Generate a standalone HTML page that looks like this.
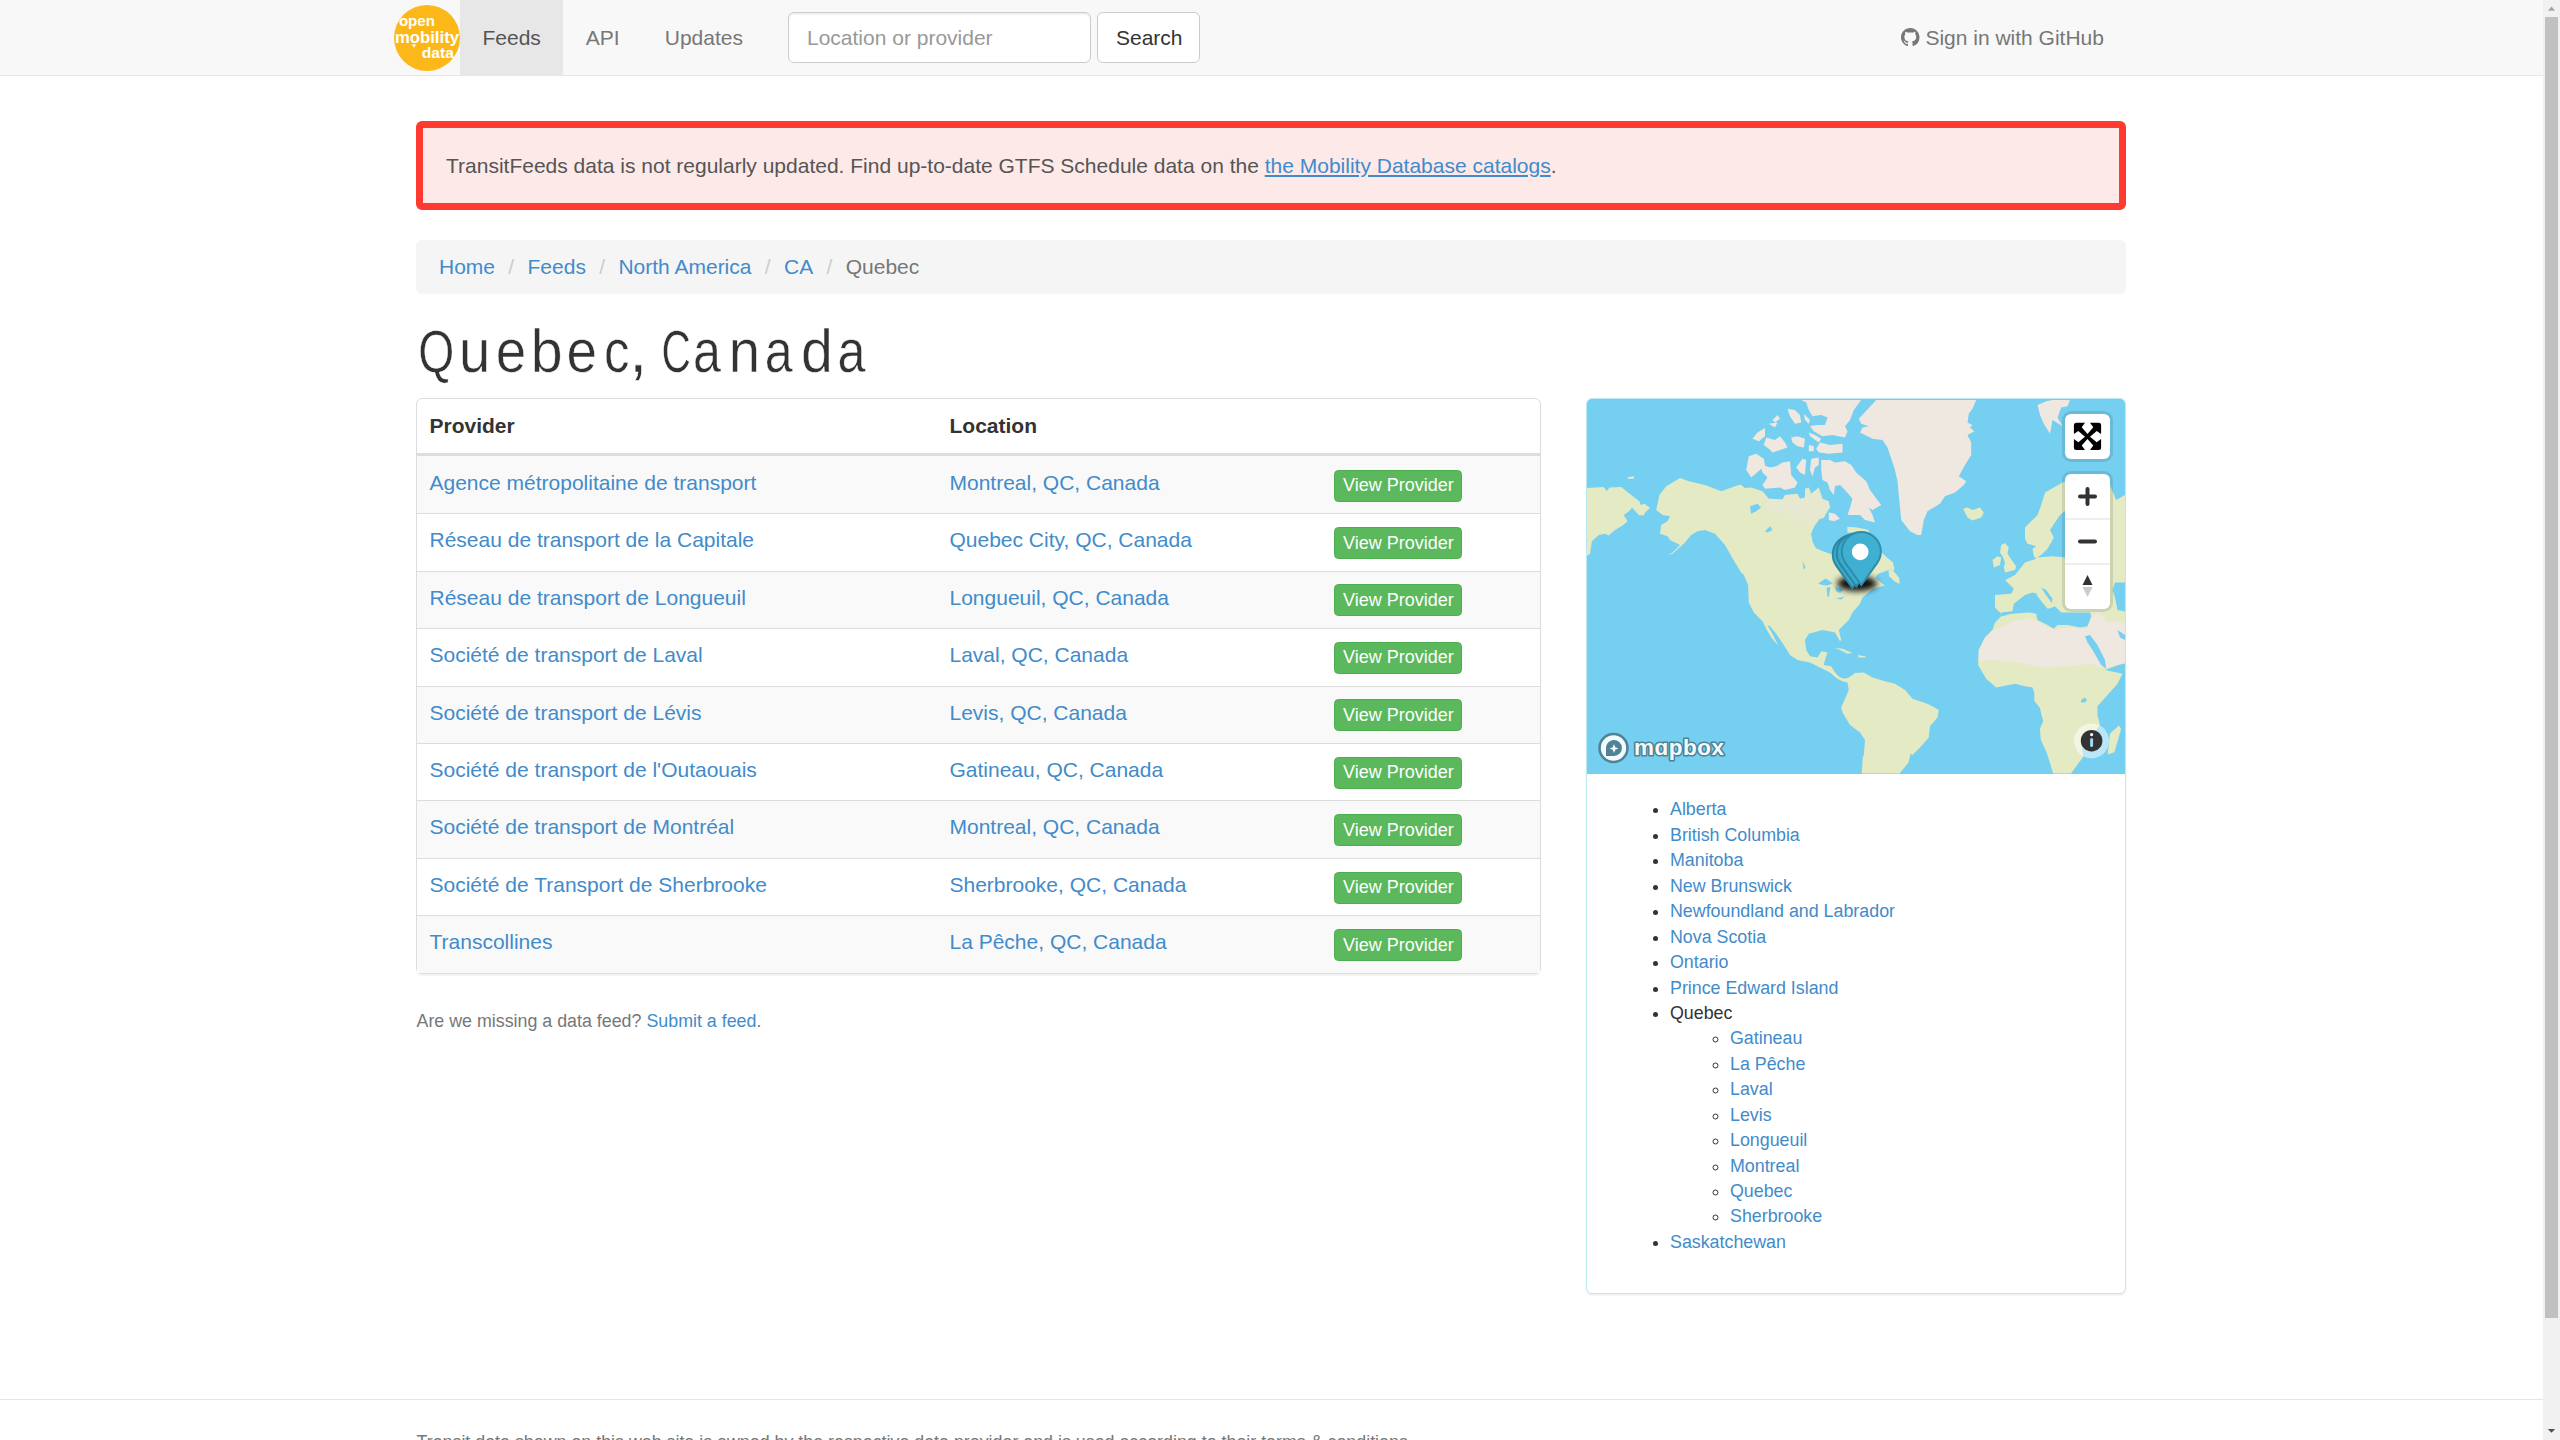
<!DOCTYPE html>
<html>
<head>
<meta charset="utf-8">
<style>
html,body{margin:0;padding:0;}
body{width:2560px;height:1440px;overflow:hidden;position:relative;background:#fff;}
#pg{zoom:1.5;width:1695.333px;font-family:"Liberation Sans",sans-serif;font-size:14px;line-height:1.42857143;color:#333;position:relative;}
*{box-sizing:border-box;}
a{color:#428bca;text-decoration:none;}
.container{width:1170px;margin:0 auto;padding:0 15px;position:relative;}
.container:after,.row:after{content:"";display:table;clear:both;}
.navbar{background:#f8f8f8;border-bottom:1px solid #e7e7e7;height:50.667px;margin-bottom:30px;}
.navbar .container{height:50px;}
.brand{position:absolute;left:0;top:3px;width:44px;height:44px;}
.nav{position:absolute;left:44px;top:0;height:50px;margin:0;padding:0;list-style:none;}
.nav li{float:left;}
.nav a{display:block;padding:15px;line-height:20px;color:#777;}
.nav li.active a{background:#e7e7e7;color:#555;}
.nform{position:absolute;left:262.67px;top:8px;}
.nform input{width:202px;height:34px;padding:6px 12px;font:inherit;font-size:14px;color:#555;border:1px solid #ccc;border-radius:4px;box-shadow:inset 0 1px 1px rgba(0,0,0,.075);background:#fff;vertical-align:middle;font-family:"Liberation Sans",sans-serif;}
.nform input::placeholder{color:#999;}
.nform button{margin-left:4px;height:34px;padding:6px 12px;font-size:14px;line-height:20px;border:1px solid #ccc;border-radius:4px;background:#fff;color:#333;vertical-align:middle;font-family:"Liberation Sans",sans-serif;width:69px;}
.nright{position:absolute;right:15px;top:0;line-height:20px;padding:15px 15px;color:#777;}
.alert{border:5px solid #ff3a30;background:#fde9e8;border-radius:4px;padding:15px 20px 15px 15px;color:#555;height:59.333px;margin-bottom:20px;}
.alert a{text-decoration:underline;}
.breadcrumb{background:#f5f5f5;border-radius:4px;padding:8px 15px;margin:0 0 20px;list-style:none;height:36px;}
.breadcrumb li{display:inline-block;}
.breadcrumb li+li:before{content:"/\00a0";padding:0 5px;color:#ccc;}
.breadcrumb .act{color:#777;}
h1{font-size:39px;line-height:39.333px;margin:20px 0 10px;font-weight:normal;color:#333;height:39.333px;}
h1 span{display:inline-block;transform:scaleX(0.88);transform-origin:0 0;letter-spacing:3.8px;word-spacing:-3px;position:relative;left:2px;top:-0.5px;}
.row{margin:0 -15px;}
.col8{float:left;width:780px;padding:0 15px;}
.col4{float:left;width:390px;padding:0 15px;}
.panel{border:1px solid #ddd;border-radius:4px;background:#fff;margin-bottom:20px;}
table{width:100%;border-collapse:collapse;table-layout:fixed;}
th,td{text-align:left;padding:7.3px 8px 8.7px;line-height:20px;vertical-align:top;}
th{border-bottom:2px solid #ddd;font-weight:bold;padding-top:7.9px;padding-bottom:8.1px;}
tbody tr:first-child td{padding-top:7.9px;padding-bottom:8.7px;}
td{border-top:1px solid #ddd;}
tbody tr{height:38.3px;}
.panel{box-shadow:0 1px 1px rgba(0,0,0,.05);}
tbody tr:nth-child(odd){background:#f9f9f9;}

.btn{display:inline-block;white-space:nowrap;position:relative;top:0.9px;left:0.67px;padding:1px 5px;font-size:12px;line-height:1.5;border-radius:3px;color:#fff;background:#5cb85c;border:1px solid #4cae4c;vertical-align:middle;}
.miss{font-size:11.9px;color:#777;margin:0 0 10px;padding-top:3.33px;}
.info{border-color:#bce8f1;}
.map{height:250px;border-radius:3px 3px 0 0;position:relative;overflow:hidden;}
.pbody{padding:15px 15px 15px;}
.lst{margin:0 0 10px;padding-left:40px;padding-top:0.67px;font-size:11.9px;line-height:16.96px;}
.lst ul{padding-left:40px;margin:0;list-style:circle;}
.footer{border-top:1px solid #e5e5e5;margin-top:50px;padding-top:20px;color:#777;font-size:11.9px;}
.mctl{position:absolute;right:15px;width:45px;background:#fff;border-radius:6px;box-shadow:0 0 0 3px rgba(0,0,0,.1);overflow:hidden;}
.mctl svg{display:block;}
</style>
</head>
<body>
<div id="pg">
<div class="navbar"><div class="container">
 <div class="brand"></div>
 <ul class="nav"><li class="active"><a>Feeds</a></li><li><a>API</a></li><li><a>Updates</a></li></ul>
 <div class="nform"><input placeholder="Location or provider"><button>Search</button></div>
 <div class="nright">Sign in with GitHub</div>
</div></div>
<div class="container">
 <div class="alert">TransitFeeds data is not regularly updated. Find up-to-date GTFS Schedule data on the <a>the Mobility Database catalogs</a>.</div>
 <ol class="breadcrumb">
<li><a>Home</a></li>
<li><a>Feeds</a></li>
<li><a>North America</a></li>
<li><a>CA</a></li>
<li class="act">Quebec</li>
</ol>
 <h1></h1>
 <div class="row">
 <div class="col8">
  <div class="panel"><table>
   <thead><tr><th style="width:346.67px">Provider</th><th style="width:256px">Location</th><th></th></tr></thead>
   <tbody>
   <tr><td><a>Agence métropolitaine de transport</a></td><td><a>Montreal, QC, Canada</a></td><td><a class="btn">View Provider</a></td></tr>
   <tr><td><a>Réseau de transport de la Capitale</a></td><td><a>Quebec City, QC, Canada</a></td><td><a class="btn">View Provider</a></td></tr>
   <tr><td><a>Réseau de transport de Longueuil</a></td><td><a>Longueuil, QC, Canada</a></td><td><a class="btn">View Provider</a></td></tr>
   <tr><td><a>Société de transport de Laval</a></td><td><a>Laval, QC, Canada</a></td><td><a class="btn">View Provider</a></td></tr>
   <tr><td><a>Société de transport de Lévis</a></td><td><a>Levis, QC, Canada</a></td><td><a class="btn">View Provider</a></td></tr>
   <tr><td><a>Société de transport de l'Outaouais</a></td><td><a>Gatineau, QC, Canada</a></td><td><a class="btn">View Provider</a></td></tr>
   <tr><td><a>Société de transport de Montréal</a></td><td><a>Montreal, QC, Canada</a></td><td><a class="btn">View Provider</a></td></tr>
   <tr><td><a>Société de Transport de Sherbrooke</a></td><td><a>Sherbrooke, QC, Canada</a></td><td><a class="btn">View Provider</a></td></tr>
   <tr><td><a>Transcollines</a></td><td><a>La Pêche, QC, Canada</a></td><td><a class="btn">View Provider</a></td></tr>
   </tbody></table></div>
  <p class="miss">Are we missing a data feed? <a>Submit a feed</a>.</p>
 </div>
 <div class="col4">
  <div class="panel info">
   <div class="map"></div>
   <div class="pbody">
    <ul class="lst">
     <li><a>Alberta</a></li>
     <li><a>British Columbia</a></li>
     <li><a>Manitoba</a></li>
     <li><a>New Brunswick</a></li>
     <li><a>Newfoundland and Labrador</a></li>
     <li><a>Nova Scotia</a></li>
     <li><a>Ontario</a></li>
     <li><a>Prince Edward Island</a></li>
     <li>Quebec
      <ul>
       <li><a>Gatineau</a></li>
       <li><a>La Pêche</a></li>
       <li><a>Laval</a></li>
       <li><a>Levis</a></li>
       <li><a>Longueuil</a></li>
       <li><a>Montreal</a></li>
       <li><a>Quebec</a></li>
       <li><a>Sherbrooke</a></li>
      </ul>
     </li>
     <li><a>Saskatchewan</a></li>
    </ul>
   </div>
  </div>
 </div>
 </div>
</div>
<div class="footer"><div class="container">Transit data shown on this web site is owned by the respective data provider and is used according to their terms &amp; conditions.</div></div>

</div>
<div id="map" style="position:absolute;left:1587px;top:399px;width:538px;height:375px;overflow:hidden;border-radius:5px 5px 0 0;"><svg width="538" height="375" viewBox="0 0 538 375" style="position:absolute;left:0;top:0"><defs><clipPath id="amc"><path d="M72.4,96.0 79.2,87.2 93.0,79.1 101.8,82.2 118.0,86.0 134.2,92.2 148.0,87.2 153.6,85.4 158.0,89.1 164.2,88.5 175.5,92.2 181.8,99.8 195.5,100.4 198.0,96.0 210.5,94.8 213.0,99.8 218.0,98.5 218.0,89.8 221.8,88.5 224.2,94.8 231.8,88.5 235.5,99.8 241.8,102.2 243.0,108.5 240.5,112.2 235.5,121.0 230.5,126.0 225.5,131.0 224.3,135.3 225.8,142.9 228.9,149.0 235.8,152.1 244.9,155.2 257.9,167.4 269.4,159.7 273.2,144.5 269.4,133.8 260.2,133.8 260.2,127.7 270.1,128.4 280.8,130.7 294.6,153.6 301.4,159.7 306.0,163.6 307.6,171.2 303.0,170.4 290.8,175.0 288.5,178.8 297.6,186.5 285.4,190.3 275.5,198.5 273.0,204.8 265.5,213.5 261.8,221.0 255.5,227.2 251.8,231.0 254.2,241.0 253.0,242.2 248.0,233.5 235.5,231.0 221.8,234.8 218.0,241.0 219.2,251.0 223.0,257.2 230.5,258.5 234.2,252.2 240.5,253.5 238.0,261.0 236.8,266.0 244.2,267.2 248.0,273.5 253.0,278.5 258.0,279.8 261.8,278.5 268.0,274.1 276.8,273.5 285.5,278.5 298.0,282.2 308.0,284.8 318.0,291.0 325.5,299.8 336.8,303.5 343.0,306.0 351.8,311.0 350.5,318.5 343.0,327.2 341.8,338.5 333.0,348.5 325.5,356.0 323.7,354.5 321.5,363.4 312.6,374.5 274.7,374.5 275.8,357.8 276.8,356.0 278.0,341.0 273.0,333.5 263.0,326.0 255.5,313.5 254.2,308.5 258.0,299.8 261.8,291.0 260.5,283.5 255.5,282.2 250.5,279.8 243.0,273.5 233.0,268.5 223.0,263.5 210.5,261.0 203.0,256.0 196.8,246.0 189.2,234.8 183.0,227.2 180.5,226.0 181.8,228.5 186.8,237.2 191.1,246.6 184.2,238.5 179.2,229.8 175.5,222.2 166.8,213.5 161.8,203.5 161.1,186.0 156.8,176.0 154.2,173.5 148.0,163.5 143.0,154.8 138.0,146.0 128.0,134.8 118.0,131.0 110.5,132.2 104.2,136.0 98.0,143.5 85.5,154.8 80.5,156.0 85.5,153.5 93.0,146.0 88.0,143.5 83.0,141.0 80.5,137.2 73.0,134.8 74.2,126.0 80.5,122.2 83.0,117.2 75.5,116.0 69.2,111.0Z"/></clipPath><filter id="bl2" x="-20%" y="-20%" width="140%" height="140%"><feGaussianBlur stdDeviation="4"/></filter><filter id="bl" x="-50%" y="-50%" width="200%" height="200%"><feGaussianBlur stdDeviation="3"/></filter></defs><rect width="538" height="375" fill="#75cff0"/><path fill="#e3eac4" d="M72.4,96.0 79.2,87.2 93.0,79.1 101.8,82.2 118.0,86.0 134.2,92.2 148.0,87.2 153.6,85.4 158.0,89.1 164.2,88.5 175.5,92.2 181.8,99.8 195.5,100.4 198.0,96.0 210.5,94.8 213.0,99.8 218.0,98.5 218.0,89.8 221.8,88.5 224.2,94.8 231.8,88.5 235.5,99.8 241.8,102.2 243.0,108.5 240.5,112.2 235.5,121.0 230.5,126.0 225.5,131.0 224.3,135.3 225.8,142.9 228.9,149.0 235.8,152.1 244.9,155.2 257.9,167.4 269.4,159.7 273.2,144.5 269.4,133.8 260.2,133.8 260.2,127.7 270.1,128.4 280.8,130.7 294.6,153.6 301.4,159.7 306.0,163.6 307.6,171.2 303.0,170.4 290.8,175.0 288.5,178.8 297.6,186.5 285.4,190.3 275.5,198.5 273.0,204.8 265.5,213.5 261.8,221.0 255.5,227.2 251.8,231.0 254.2,241.0 253.0,242.2 248.0,233.5 235.5,231.0 221.8,234.8 218.0,241.0 219.2,251.0 223.0,257.2 230.5,258.5 234.2,252.2 240.5,253.5 238.0,261.0 236.8,266.0 244.2,267.2 248.0,273.5 253.0,278.5 258.0,279.8 261.8,278.5 268.0,274.1 276.8,273.5 285.5,278.5 298.0,282.2 308.0,284.8 318.0,291.0 325.5,299.8 336.8,303.5 343.0,306.0 351.8,311.0 350.5,318.5 343.0,327.2 341.8,338.5 333.0,348.5 325.5,356.0 323.7,354.5 321.5,363.4 312.6,374.5 274.7,374.5 275.8,357.8 276.8,356.0 278.0,341.0 273.0,333.5 263.0,326.0 255.5,313.5 254.2,308.5 258.0,299.8 261.8,291.0 260.5,283.5 255.5,282.2 250.5,279.8 243.0,273.5 233.0,268.5 223.0,263.5 210.5,261.0 203.0,256.0 196.8,246.0 189.2,234.8 183.0,227.2 180.5,226.0 181.8,228.5 186.8,237.2 191.1,246.6 184.2,238.5 179.2,229.8 175.5,222.2 166.8,213.5 161.8,203.5 161.1,186.0 156.8,176.0 154.2,173.5 148.0,163.5 143.0,154.8 138.0,146.0 128.0,134.8 118.0,131.0 110.5,132.2 104.2,136.0 98.0,143.5 85.5,154.8 80.5,156.0 85.5,153.5 93.0,146.0 88.0,143.5 83.0,141.0 80.5,137.2 73.0,134.8 74.2,126.0 80.5,122.2 83.0,117.2 75.5,116.0 69.2,111.0Z"/>
<path fill="#e3eac4" d="M458.0,93.5 475.5,83.5 493.0,78.5 513.0,82.2 523.0,86.0 529.2,101.0 538.0,96.0 543.0,96.0 543.0,263.5 538.0,263.5 518.0,271.0 535.5,274.8 530.5,284.8 520.5,296.0 510.5,307.2 510.5,316.0 513.0,326.0 514.1,324.4 495.1,348.9 496.2,357.8 484.0,374.5 466.2,374.5 462.8,363.4 459.5,353.3 453.9,341.1 452.8,330.0 456.2,322.2 452.8,308.8 447.3,302.1 447.3,291.0 448.0,296.0 445.5,288.5 438.0,287.2 428.0,284.8 409.2,288.5 399.2,279.8 391.1,266.0 391.8,251.0 398.0,238.5 405.5,231.0 408.0,223.5 415.5,216.0 413.0,213.5 408.0,208.5 408.0,196.0 424.2,194.8 426.8,189.8 418.0,181.0 428.0,176.0 438.0,163.5 449.2,159.8 446.8,157.2 445.5,149.8 449.2,147.2 440.5,144.8 438.0,139.8 438.0,128.5 443.0,123.5 450.5,116.0 454.2,106.0Z"/>
<path fill="#eee8e0" fill-opacity=".5" filter="url(#bl2)" clip-path="url(#amc)" d="M175.5,92.2 181.8,99.8 195.5,100.4 198.0,96.0 210.5,94.8 213.0,99.8 218.0,98.5 218.0,89.8 221.8,88.5 224.2,94.8 231.8,88.5 235.5,99.8 241.8,102.2 243.0,108.5 240.5,112.2 235.5,121.0 229.2,127.2 210.5,122.2 191.8,116.0 179.2,107.2 173.0,96.0Z"/>
<path fill="#eee8e0" d="M391.8,262.2 391.8,251.0 398.0,238.5 405.5,231.0 415.5,228.5 424.2,222.2 443.0,219.8 450.5,222.2 460.5,228.5 468.0,229.8 480.5,228.5 499.2,229.8 503.0,223.5 505.5,216.0 513.0,214.8 520.5,223.5 530.5,222.2 543.0,226.0 543.0,263.5 518.0,268.5 513.0,268.5 505.5,264.8 480.5,267.2 455.5,268.5 430.5,263.5 405.5,261.0Z"/>
<path fill="#75cff0" d="M414.2,213.5 425.5,212.2 426.8,204.8 438.0,196.0 445.5,193.5 450.5,194.8 455.5,203.5 461.8,209.8 468.0,207.2 474.2,213.5 484.2,213.5 503.0,213.5 504.2,217.2 500.5,227.2 493.0,228.5 480.5,226.0 470.5,226.0 466.8,229.8 460.5,226.0 450.5,221.0 449.2,214.8 443.0,213.5 424.2,214.8 415.5,217.2Z"/>
<path fill="#e3eac4" d="M448.0,191.0 453.0,188.5 456.8,193.5 463.0,202.2 464.2,207.2 460.5,209.8 455.5,203.5 450.5,197.2Z"/>
<path fill="#75cff0" d="M454.2,188.5 459.2,191.0 465.5,199.8 464.9,204.1 458.0,194.8Z"/>
<path fill="#75cff0" d="M528.0,183.5 543.0,183.5 543.0,213.5 530.5,211.0 528.0,198.5 525.5,191.0Z"/>
<path fill="#75cff0" d="M530.5,231.0 538.0,236.0 543.0,243.5 533.0,238.5Z"/>
<path fill="#75cff0" d="M498.0,237.2 503.0,236.0 510.5,246.0 518.0,261.0 519.2,269.8 514.2,266.0 505.5,251.0 500.5,243.5Z"/>
<path fill="#75cff0" d="M450.5,158.5 455.5,154.8 460.5,149.8 464.2,143.5 466.8,138.5 463.0,131.0 468.0,123.5 473.0,116.0 479.2,111.0 479.2,158.5 465.5,157.2Z"/>
<path fill="#75cff0" d="M494.2,301.0 498.0,298.5 499.9,301.0 498.0,303.5 494.2,303.5Z"/>
<path fill="#e3eac4" d="M376.1,109.8 380.5,108.5 385.5,111.0 393.0,108.5 396.8,113.5 394.2,118.5 385.5,121.6 380.5,118.5 378.0,113.5Z"/>
<path fill="#e3eac4" d="M414.2,146.0 418.0,144.1 421.8,148.5 420.5,154.8 425.5,162.2 429.2,167.2 428.0,171.0 418.0,173.5 416.8,168.5 418.0,163.5 415.5,157.2 413.0,153.5Z"/>
<path fill="#e3eac4" d="M405.5,161.0 410.5,157.2 414.2,158.5 413.0,166.0 406.8,168.5Z"/>
<path fill="#eee8e0" d="M450.5,6.0 459.2,2.2 465.5,1.0 483.0,1.0 480.5,7.2 474.2,8.5 470.5,18.5 475.5,27.2 465.5,21.0 463.0,34.8 456.8,24.8 453.0,16.0Z"/>
<path fill="#e3eac4" d="M520.7,355.6 523.0,334.4 531.9,326.6 534.1,330.0 527.4,353.3Z"/>
<path fill="#eee8e0" d="M289.2,1.0 271.8,19.8 274.2,24.8 281.8,27.2 275.5,28.5 273.0,33.5 285.5,39.8 295.5,41.0 300.5,48.5 308.0,71.0 310.5,82.2 311.8,96.0 314.2,121.0 323.0,132.2 330.5,136.0 334.2,136.0 336.8,121.0 340.5,112.2 353.0,104.8 358.0,97.2 368.0,93.5 376.8,86.0 379.2,82.2 371.8,77.2 378.0,66.0 384.2,56.0 384.2,43.5 380.5,36.0 387.4,32.2 383.0,28.5 385.5,26.0 380.5,23.5 381.8,14.8 385.5,9.8 389.2,1.0Z"/>
<path fill="#75cff0" d="M224.3,135.3 227.4,126.9 232.7,120.0 241.9,117.7 244.9,121.5 252.6,123.1 260.2,127.7 260.2,133.8 269.4,133.8 273.2,144.5 269.4,159.7 257.9,167.4 244.9,155.2 235.8,152.1 228.9,149.0 225.8,142.9Z"/>
<path fill="#eee8e0" d="M159.2,71.0 161.8,57.2 169.2,54.8 176.8,59.8 178.0,66.0 173.0,71.0 164.2,78.5Z"/>
<path fill="#eee8e0" d="M173.0,64.8 183.0,68.5 189.2,67.2 195.5,63.5 203.0,62.2 204.2,76.0 210.5,83.5 208.0,88.5 198.0,91.0 193.0,88.5 178.0,89.8 175.5,86.0 180.5,78.5 175.5,73.5Z"/>
<path fill="#eee8e0" d="M165.5,39.8 170.5,33.5 178.0,29.1 178.0,37.2 171.8,42.2Z"/>
<path fill="#eee8e0" d="M176.8,46.0 179.2,38.5 188.0,41.0 193.0,37.2 198.0,43.5 200.5,48.5 193.0,51.0 185.5,53.5 181.8,49.8Z"/>
<path fill="#eee8e0" d="M204.2,38.5 210.5,37.2 218.0,39.8 216.8,48.5 210.5,47.2 205.5,43.5Z"/>
<path fill="#eee8e0" d="M221.8,46.0 226.8,47.2 226.8,52.2 221.8,52.2Z"/>
<path fill="#eee8e0" d="M229.2,49.8 233.0,43.5 243.0,46.0 255.5,44.8 255.5,53.5 241.8,54.8 231.8,53.5Z"/>
<path fill="#eee8e0" d="M221.8,33.5 228.0,36.0 234.2,39.8 231.8,43.5 223.0,37.2Z"/>
<path fill="#eee8e0" d="M185.5,21.0 190.5,16.0 193.0,19.8 188.0,23.5Z"/>
<path fill="#eee8e0" d="M181.8,24.8 190.5,23.5 188.0,28.5Z"/>
<path fill="#eee8e0" d="M214.2,1.0 274.2,1.0 266.8,11.0 263.0,21.0 258.0,27.2 260.5,32.2 258.0,38.5 245.5,36.0 235.5,37.2 226.8,32.2 223.0,27.2 229.2,26.0 238.0,26.0 240.5,18.5 234.2,16.0 225.5,17.2 221.8,11.0 219.2,3.5Z"/>
<path fill="#eee8e0" d="M200.5,9.8 208.0,11.0 213.0,16.0 214.2,23.5 208.0,24.8 203.0,17.2Z"/>
<path fill="#eee8e0" d="M216.8,14.8 223.0,21.0 221.8,24.8 218.0,21.0Z"/>
<path fill="#eee8e0" d="M234.2,61.0 243.0,61.0 248.0,63.5 258.0,62.2 264.2,66.0 269.2,73.5 279.2,82.2 283.0,91.0 290.5,101.0 294.2,106.0 285.5,111.0 281.8,108.5 285.5,116.0 288.0,123.5 278.0,121.0 273.0,116.0 260.5,116.0 263.0,108.5 265.5,99.8 258.0,91.0 253.0,86.0 248.0,87.2 246.8,96.0 243.0,91.0 240.5,83.5 235.5,81.0 234.2,71.0Z"/>
<path fill="#eee8e0" d="M224.2,59.8 231.8,58.5 231.8,66.0 228.0,68.5 225.5,77.2 223.0,71.0Z"/>
<path fill="#eee8e0" d="M209.2,68.5 215.5,59.8 219.2,61.0 218.0,76.0 213.0,73.5Z"/>
<path fill="#eee8e0" d="M241.8,113.5 248.0,114.8 253.0,119.8 246.8,122.2 241.8,121.0Z"/>
<path fill="#eee8e0" d="M40.5,78.5 46.8,77.2 46.8,79.8 40.5,79.8Z"/>
<path fill="#e3eac4" d="M-2.0,89.1 16.8,87.9 19.9,92.2 22.4,88.5 34.2,87.9 44.2,96.0 52.4,102.2 53.6,106.0 57.4,104.8 63.0,109.1 58.0,113.5 56.8,116.6 51.8,116.0 44.9,108.5 43.0,111.6 36.8,116.0 40.5,122.2 35.5,126.6 28.0,131.0 21.8,136.6 18.0,134.8 11.8,136.0 4.9,142.2 3.0,154.8 -2.0,158.5Z"/>
<path fill="#75cff0" d="M163.0,107.2 170.5,104.8 174.2,108.5 169.2,112.2 164.2,114.8Z"/>
<path fill="#75cff0" d="M178.0,132.2 183.0,127.2 185.5,131.0 180.5,133.5Z"/>
<path fill="#75cff0" d="M215.5,162.2 218.6,168.5 216.8,170.4Z"/>
<path fill="#75cff0" d="M231.2,184.2 238.8,179.6 245.7,184.2 240.4,186.5 234.2,185.7Z"/>
<path fill="#75cff0" d="M239.6,188.8 243.4,188.0 241.9,197.9 240.4,197.2Z"/>
<path fill="#75cff0" d="M248.0,188.0 256.4,190.3 253.3,194.1 249.5,192.6Z"/>
<path fill="#75cff0" d="M249.2,199.8 258.0,197.2 254.2,200.4Z"/>
<path fill="#e3eac4" d="M248.0,249.1 255.5,249.8 265.5,254.1 260.5,254.8 253.0,251.0Z"/>
<path fill="#e3eac4" d="M270.5,256.0 278.0,257.2 279.2,258.5 271.8,258.5Z"/>
<path fill="#e3eac4" d="M301.4,171.2 305.3,170.4 312.1,178.8 312.9,184.9 307.6,182.6 302.2,177.3Z"/><ellipse cx="270" cy="184.5" rx="20" ry="7.5" fill="#000" opacity=".95" filter="url(#bl)"/><path d="M249.4,166.9 A19.5,19.5 0 1,1 281.2,166.9 L265.3,189.0 Z" fill="#3aa9cc" stroke="#2b86a3" stroke-width="2"/><path d="M253.4,165.4 A19.5,19.5 0 1,1 285.2,165.4 L269.3,187.5 Z" fill="#3aa9cc" stroke="#2b86a3" stroke-width="2"/><path d="M258.4,163.9 A19.5,19.5 0 1,1 290.2,163.9 L274.3,186.0 Z" fill="#40b0d2" stroke="#2d8eac" stroke-width="2"/><circle cx="273.2" cy="152.9" r="8.3" fill="#fff"/><g><circle cx="26.5" cy="349" r="14" fill="#f3fafd" stroke="#4f8295" stroke-width="2.6"/><path d="M19,357 L19,350 A8,8 0 1,1 27,357 Z" fill="#4f8295"/><path d="M27,345 L28.2,348.3 L31.5,349.5 L28.2,350.7 L27,354 L25.8,350.7 L22.5,349.5 L25.8,348.3 Z" fill="#fff"/><text x="47" y="356.3" font-family="Liberation Sans" font-weight="bold" font-size="22.5" letter-spacing="0.5" fill="#f3fafd" stroke="#4f8295" stroke-width="3.2" stroke-linejoin="round" paint-order="stroke">mɑpbox</text></g><circle cx="504.5" cy="341.9" r="17.5" fill="#fff" opacity=".5"/><circle cx="504.6" cy="341.7" r="10.8" fill="#333"/><circle cx="504.6" cy="335.6" r="1.6" fill="#fff"/><rect x="503.1" y="339" width="3" height="9" rx="1.5" fill="#9ed9ef"/></svg><div class="mctl" style="top:15px;height:45px"><svg width="45" height="45" viewBox="0 0 45 45"><rect x="8.9" y="8.8" width="27.2" height="27.2" rx="2.5" fill="#000"/><path fill="#fff" d="M20.00,7.50 L25.00,7.50 L25.00,8.80 L28.30,13.20 L22.50,19.90 L16.70,13.20 L20.00,8.80Z M7.50,19.90 L8.90,19.90 L13.30,17.10 L20.00,22.70 L13.30,28.20 L8.90,24.90 L7.50,24.90Z M37.50,19.90 L36.10,19.90 L31.70,17.10 L25.00,22.70 L31.70,28.20 L36.10,24.90 L37.50,24.90Z M20.00,37.50 L25.00,37.50 L25.00,36.00 L28.30,31.60 L22.50,24.90 L16.70,31.60 L20.00,36.00Z"/></svg></div>
<div class="mctl" style="top:75px;height:135px"><svg width="45" height="135" viewBox="0 0 45 135">
<path d="M15,22.5h15M22.5,15v15" stroke="#333" stroke-width="4" stroke-linecap="round"/>
<rect x="0" y="44.5" width="45" height="1" fill="#ddd"/>
<path d="M15,67.5h15" stroke="#333" stroke-width="4" stroke-linecap="round"/>
<rect x="0" y="89.5" width="45" height="1" fill="#ddd"/>
<path d="M22.5,101 L27.5,111 H17.5Z" fill="#333"/><path d="M22.5,123 L27.5,113 H17.5Z" fill="#ccc"/>
</svg></div></div><!--/map-->
<svg id="logo" width="70" height="70" viewBox="392 3 70 70" style="position:absolute;left:392px;top:3px">
<circle cx="427" cy="37.9" r="33" fill="#fbb818"/>
<g fill="#fff" font-family="Liberation Sans" font-weight="bold">
<text x="398.9" y="25.8" font-size="15" textLength="36" lengthAdjust="spacingAndGlyphs">open</text>
<text x="395" y="42.8" font-size="16.5" textLength="64" lengthAdjust="spacingAndGlyphs">mobility</text>
<text x="421.7" y="58.3" font-size="15.5" textLength="32.2" lengthAdjust="spacingAndGlyphs">data</text>
<path d="M411.7,44.4 L416.1,44.4 L413.9,47.8Z"/>
</g></svg>
<svg width="18.5" height="18.5" viewBox="0 0 16 16" style="position:absolute;left:1901.2px;top:28.3px"><path fill="#777" d="M8 0C3.58 0 0 3.58 0 8c0 3.54 2.29 6.53 5.47 7.59.4.07.55-.17.55-.38 0-.19-.01-.82-.01-1.49-2.01.37-2.530-.49-2.69-.94-.09-.23-.48-.94-.82-1.13-.28-.15-.68-.52-.01-.53.63-.01 1.08.58 1.23.82.72 1.21 1.87.87 2.33.66.07-.52.28-.87.51-1.07-1.78-.2-3.64-.89-3.640-3.95 0-.87.31-1.59.82-2.15-.08-.2-.36-1.02.08-2.12 0 0 .67-.21 2.2.82.64-.18 1.32-.27 2-.27.68 0 1.36.09 2 .27 1.53-1.04 2.2-.82 2.2-.82.44 1.1.16 1.92.08 2.12.51.56.82 1.27.82 2.15 0 3.07-1.87 3.75-3.65 3.95.29.25.54.73.54 1.48 0 1.070-.01 1.93-.01 2.2 0 .21.15.46.55.38A8.013 8.013 0 0016 8c0-4.42-3.58-8-8-8z"/></svg>
<div id="sb" style="position:absolute;left:2543px;top:0;width:17px;height:1440px;background:#f1f1f1">
<div style="position:absolute;left:2px;top:17px;width:13px;height:1301px;background:#c1c1c1"></div>
<svg width="17" height="17" style="position:absolute;left:0;top:0"><path d="M8.5,6.5 L12,10.8 L5,10.8Z" fill="#a3a3a3"/></svg>
<svg width="17" height="17" style="position:absolute;left:0;top:1423px"><path d="M8.5,9.8 L12.2,5.9 L4.8,5.9Z" fill="#505050"/></svg>
</div>
<svg id="h1svg" width="520" height="80" viewBox="400 315 520 80" style="position:absolute;left:400px;top:315px"><g font-family="Liberation Sans" font-size="58.4" fill="#333" stroke="#fff" stroke-width="0.5" paint-order="fill"><text transform="translate(418.31,371.70) scale(0.793,1.000)">Q</text><text transform="translate(458.95,371.70) scale(0.963,1.050)">u</text><text transform="translate(495.76,371.70) scale(0.941,1.050)">e</text><text transform="translate(530.70,371.70) scale(0.982,1.050)">b</text><text transform="translate(566.56,371.70) scale(0.941,1.050)">e</text><text transform="translate(604.03,371.70) scale(0.874,1.050)">c</text><text transform="translate(628.87,371.70) scale(1.169,1.150)">,</text><text transform="translate(661.53,371.70) scale(0.698,1.000)">C</text><text transform="translate(693.07,371.70) scale(0.860,1.050)">a</text><text transform="translate(728.76,371.70) scale(0.963,1.050)">n</text><text transform="translate(764.87,371.70) scale(0.860,1.050)">a</text><text transform="translate(800.99,371.70) scale(0.982,1.050)">d</text><text transform="translate(837.57,371.70) scale(0.860,1.050)">a</text></g></svg>
<!--/extra-->
</body>
</html>
